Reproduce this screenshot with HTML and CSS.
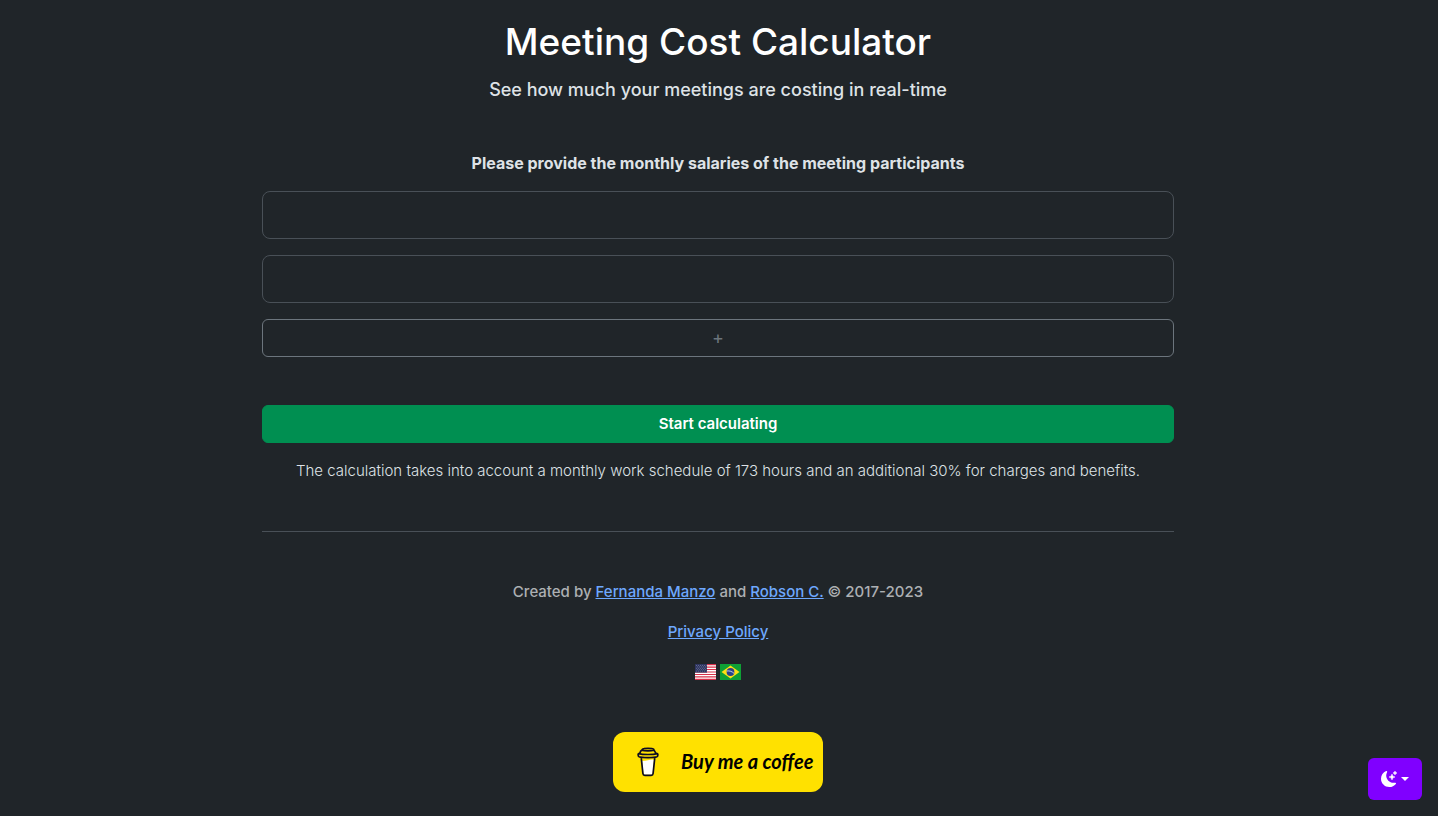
FILE: index.html
```html
<!DOCTYPE html>
<html lang="en">
<head>
<meta charset="utf-8">
<meta name="viewport" content="width=device-width, initial-scale=1">
<title>Meeting Cost Calculator</title>
<link rel="stylesheet" href="styles.css">
</head>
<body>
<main class="container">
  <header class="header">
    <h1 class="title">Meeting Cost Calculator</h1>
    <p class="lead">See how much your meetings are costing in real-time</p>
  </header>

  <form class="form">
    <label class="form-label" id="salary-label" for="salary-1">Please provide the monthly salaries of the meeting participants</label>
    <input class="form-control" type="text" inputmode="decimal" id="salary-1">
    <input class="form-control" type="text" inputmode="decimal" id="salary-2" aria-labelledby="salary-label">
    <button class="btn btn-add" type="button">+</button>
    <button class="btn btn-start" type="submit">Start calculating</button>
    <p class="note">The calculation takes into account a monthly work schedule of 173 hours and an additional 30% for charges and benefits.</p>
  </form>

  <footer class="footer">
    <p>Created by <a href="#">Fernanda Manzo</a> and <a href="#">Robson C.</a> © 2017-2023</p>
    <p><a href="#">Privacy Policy</a></p>
    <p class="flags">
      <a href="#">
        <svg class="flag" viewBox="0 0 21 16">
          <rect width="21" height="16" fill="#fff"/>
          <path d="M0 .6h21M0 3.1h21M0 5.5h21M0 8h21M0 10.500h21M0 12.900h21M0 15.400h21" stroke="#d8304a" stroke-width="1.230"/>
          <rect width="12" height="8.600" fill="#2e3560"/>
          <path d="M1 1.500h10.500M1 4.300h10.500M1 7.100h10.500" stroke="#8b90b0" stroke-width=".7" stroke-dasharray=".8 1.200"/>
          <path d="M2 2.900h9M2 5.700h9" stroke="#8b90b0" stroke-width=".7" stroke-dasharray=".8 1.200"/>
        </svg>
      </a>
      <a href="#">
        <svg class="flag" viewBox="0 0 21 16">
          <rect width="21" height="16" fill="#0ea035"/>
          <path d="M10.500 1.600L19.500 8l-9 6.400L1.500 8z" fill="#fee014"/>
          <circle cx="10.500" cy="8" r="3.900" fill="#2b4189"/>
          <path d="M6.800 7c2.700-.5 5.400.5 7.200 2.400" fill="none" stroke="#d5dceb" stroke-width=".9"/>
        </svg>
      </a>
    </p>
  </footer>

  <a class="coffee" href="#">
    <svg class="coffee-cup" viewBox="0 0 22 30">
      <path d="M5.200 14q3.300-.3 5.800-.8 3-.8 6-.5l-1.400 13.500q-.2 1.500-1.500 1.500H8q-1.400 0-1.500-1.500z" fill="#fff"/>
      <path d="M4.200 10.500l1.700 16q.2 1.800 1.900 1.800h6.400q1.700 0 1.900-1.800l1.700-16M1.700 6.600q-.6.3-.6 1.200 0 1.500 1 2 2 .8 8.900.8t8.900-.8q1-.5 1-2 0-.9-.7-1.200-3 .9-9.200.9t-9.300-.9zM2.800 6.500q.4-2.700 2-3.400 1.800.7 6.200.7 4 0 5.800-.5M4.800 3.100Q5.200 1.600 7 1.500q4-.4 8 0 2 .2 2.200 1.800l1.900 3.300" fill="none" stroke="#0d0c22" stroke-width="1.700" stroke-linecap="round" stroke-linejoin="round"/>
    </svg>
    <span class="coffee-text">Buy me a coffee</span>
  </a>
</main>

<button class="theme-toggle" type="button" aria-label="Toggle theme">
  <svg class="theme-icon" viewBox="0 0 16 16" fill="currentColor">
    <path d="M6 .278a.768.768 0 0 1 .08.858 7.208 7.208 0 0 0-.878 3.460c0 4.021 3.278 7.277 7.318 7.277.527 0 1.040-.055 1.533-.160a.787.787 0 0 1 .810.316.733.733 0 0 1-.031.893A8.349 8.349 0 0 1 8.344 16C3.734 16 0 12.286 0 7.710 0 4.266 2.114 1.312 5.124.060A.752.752 0 0 1 6 .278z"/>
    <path stroke="currentColor" stroke-width=".4" d="M10.794 3.148a.217.217 0 0 1 .412 0l.387 1.162c.173.518.579.924 1.097 1.097l1.162.387a.217.217 0 0 1 0 .412l-1.162.387a1.734 1.734 0 0 0-1.097 1.097l-.387 1.162a.217.217 0 0 1-.412 0l-.387-1.162A1.734 1.734 0 0 0 9.310 6.593l-1.162-.387a.217.217 0 0 1 0-.412l1.162-.387a1.734 1.734 0 0 0 1.097-1.097l.387-1.162zM13.863.099a.145.145 0 0 1 .274 0l.258.774c.115.346.386.617.732.732l.774.258a.145.145 0 0 1 0 .274l-.774.258a1.156 1.156 0 0 0-.732.732l-.258.774a.145.145 0 0 1-.274 0l-.258-.774a1.156 1.156 0 0 0-.732-.732l-.774-.258a.145.145 0 0 1 0-.274l.774-.258c.346-.115.617-.386.732-.732L13.863.100z"/>
  </svg>
  <span class="caret"></span>
</button>
</body>
</html>
```
FILE: styles.css
```css
* {
  box-sizing: border-box;
}

body {
  margin: 0;
  padding-right: 2px;
  background-color: #202529;
  color: #dee2e6;
  font-family: Inter, "Liberation Sans", sans-serif;
  font-size: 15px;
  line-height: 24px;
}

h1, p {
  margin: 0;
}

a {
  color: #6ea8fe;
}

.container {
  max-width: 960px;
  margin: 0 auto;
  padding: 17px 24px;
  text-align: center;
}

.title {
  margin-bottom: 8px;
  color: #fff;
  font-size: 37px;
  font-weight: 500;
  line-height: 50px;
}

.lead {
  font-size: 18px;
  font-weight: 500;
  line-height: 30px;
}

.form {
  display: flex;
  flex-direction: column;
  gap: 16px;
  margin-top: 46px;
  padding-bottom: 48px;
  border-bottom: 1px solid #495057;
}

.form-label {
  font-size: 16px;
  font-weight: 700;
}

.form-control {
  width: 100%;
  height: 48px;
  padding: 8px 16px;
  border: 1px solid #495057;
  border-radius: 8px;
  background-color: transparent;
  color: #dee2e6;
  font: inherit;
  text-align: center;
}

.btn {
  padding: 6px 12px;
  border: 1px solid;
  border-radius: 6px;
  font: inherit;
  cursor: pointer;
}

.btn-add {
  border-color: #6c757d;
  background-color: transparent;
  color: #6c757d;
  font-size: 18px;
}

.btn-start {
  margin-top: 32px;
  border-color: #008f51;
  background-color: #008f51;
  color: #fff;
  font-weight: 600;
}

.note {
  font-weight: 300;
}

.footer {
  display: flex;
  flex-direction: column;
  gap: 16px;
  padding: 48px 0;
  color: #adb0b3;
  font-weight: 500;
}

.flags {
  display: flex;
  justify-content: center;
  align-items: center;
  gap: 4px;
  height: 24px;
}

.flag {
  display: block;
  width: 21px;
  height: 16px;
}

.coffee {
  display: inline-flex;
  align-items: center;
  gap: 22px;
  width: 210px;
  height: 60px;
  padding-left: 24px;
  border-radius: 12px;
  background-color: #ffe100;
  color: #000;
  text-decoration: none;
}

.coffee-cup {
  flex: none;
  width: 22px;
  height: 30px;
}

.coffee-text {
  padding-bottom: 2px;
  font-family: Lato, sans-serif;
  font-size: 20px;
  font-style: italic;
  font-weight: 700;
  white-space: nowrap;
}

/* stays in the corner over the page */
.theme-toggle {
  position: fixed;
  right: 16px;
  bottom: 16px;
  display: flex;
  align-items: center;
  justify-content: center;
  gap: 4px;
  width: 54px;
  height: 42px;
  padding: 0;
  border: 0;
  border-radius: 6px;
  background-color: #8000ff;
  color: #fff;
  cursor: pointer;
}

.theme-icon {
  width: 16px;
  height: 16px;
}

.caret {
  border-top: 4px solid;
  border-right: 4px solid transparent;
  border-left: 4px solid transparent;
}
```
